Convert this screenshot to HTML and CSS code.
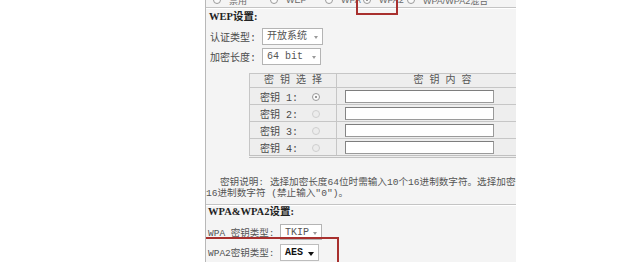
FILE: index.html
```html
<!DOCTYPE html>
<html lang="zh">
<head>
<meta charset="utf-8">
<link rel="stylesheet" href="styles.css">
</head>
<body>
<div class="panel">
  <div class="modes">
    <span class="opt o1"><i class="radio"></i>禁用</span>
    <span class="opt o2"><i class="radio"></i>WEP</span>
    <span class="opt o3"><i class="radio"></i>WPA</span>
    <span class="opt o4"><i class="radio on"></i>WPA2</span>
    <span class="opt o5"><i class="radio"></i>WPA/WPA2混合</span>
  </div>
  <div class="sep"></div>
  <div class="title">WEP设置:</div>
  <div class="field wep"><span class="label">认证类型:</span><span class="select s1">开放系统<i class="arrow"></i></span></div>
  <div class="field wep"><span class="label">加密长度:</span><span class="select s2">64 bit<i class="arrow"></i></span></div>
  <table class="keys">
    <tr class="head"><td class="c1">密 钥 选 择</td><td class="c2">密 钥 内 容</td></tr>
    <tr><td class="c1"><span class="kl">密钥 1:</span><i class="radio on"></i></td><td class="c2"><span class="input"></span></td></tr>
    <tr><td class="c1"><span class="kl">密钥 2:</span><i class="radio dim"></i></td><td class="c2"><span class="input"></span></td></tr>
    <tr><td class="c1"><span class="kl">密钥 3:</span><i class="radio dim"></i></td><td class="c2"><span class="input"></span></td></tr>
    <tr><td class="c1"><span class="kl">密钥 4:</span><i class="radio dim"></i></td><td class="c2"><span class="input"></span></td></tr>
  </table>
  <p class="note">密钥说明: 选择加密长度64位时需输入10个16进制数字符。选择加密长度128位时需输入26个<br>16进制数字符 (禁止输入"0")。</p>
  <div class="sep"></div>
  <div class="title t2">WPA&amp;WPA2设置:</div>
  <div class="field wpa"><span class="label">WPA 密钥类型:</span><span class="select s3">TKIP<i class="arrow"></i></span></div>
  <div class="field wpa"><span class="label">WPA2密钥类型:</span><span class="select s4 active">AES<i class="arrow"></i></span></div>
  <div class="mark mark-top"></div>
  <div class="mark mark-bottom"></div>
</div>
</body>
</html>
```
FILE: styles.css
```css
html, body {
  margin: 0;
  padding: 0;
  background: #ffffff;
}
body {
  width: 620px;
  height: 262px;
  overflow: hidden;
  font-family: "Liberation Mono", "Noto Sans CJK SC", monospace;
  font-size: 10px;
  color: #4a4a4a;
}
.panel {
  position: relative;
  margin-left: 205px;
  width: 310px;
  height: 262px;
  overflow: hidden;
  background: #f4f4f4;
  border-left: 1px solid #b8b8b8;
}
.modes {
  display: flex;
  height: 14px;
  margin-top: -7px;
  padding-left: 7px;
  align-items: center;
  overflow: hidden;
  white-space: nowrap;
  color: #6a6a6a;
  font-size: 9px;
  font-family: "Liberation Sans", "Noto Sans CJK SC", sans-serif;
}
.opt {
  display: flex;
  flex: none;
  align-items: center;
  gap: 8px;
  white-space: nowrap;
}
.opt.o1 { width: 57px; }
.opt.o2 { width: 55px; }
.opt.o3 { width: 38px; }
.opt.o4 { width: 44px; }
.radio {
  display: inline-block;
  flex: none;
  width: 8px;
  height: 8px;
  border-radius: 50%;
  border: 1px solid #9a9a9a;
  background: #fafafa;
  box-sizing: border-box;
  position: relative;
}
.radio.on::after {
  content: "";
  position: absolute;
  left: 2px;
  top: 2px;
  width: 2px;
  height: 2px;
  border-radius: 50%;
  background: #777;
}
.radio.dim {
  border-color: #cfcfcf;
  background: #ececec;
}
.sep {
  height: 1px;
  background: #c4c4c4;
  border-bottom: 1px solid #ffffff;
}
.title {
  height: 14px;
  line-height: 14px;
  margin-top: 1px;
  padding-left: 3px;
  font-weight: bold;
  color: #222;
  font-family: "Liberation Serif", "Noto Sans CJK SC", serif;
  font-size: 10.5px;
}
.title.t2 {
  margin-top: 0;
  height: 12px;
  line-height: 12px;
  padding-left: 2px;
}
.field {
  display: flex;
  align-items: center;
  height: 20px;
  white-space: nowrap;
}
.field.wep {
  padding-left: 4px;
}
.title + .field.wep { margin-top: 2px; }
.field.wep .label { width: 52px; }
.field.wpa {
  padding-left: 2px;
}
.title.t2 + .field.wpa { margin-top: 4px; }
.field.wpa .label { width: 72px; font-size: 9.5px; color: #555; }
.select {
  position: relative;
  display: inline-block;
  box-sizing: border-box;
  height: 17px;
  line-height: 15px;
  padding-left: 4px;
  background: #ffffff;
  border: 1px solid #b4b4b4;
  color: #555;
}
.select.s1 { width: 61px; }
.select.s2 { width: 59px; }
.select.s3 { width: 42px; height: 16px; }
.select.s4 { width: 39px; }
.select.active { color: #111; border-color: #bdbdbd; font-weight: bold; }
.arrow {
  position: absolute;
  right: 4px;
  top: 7px;
  width: 0;
  height: 0;
  border-left: 2.5px solid transparent;
  border-right: 2.5px solid transparent;
  border-top: 3px solid #9a9a9a;
}
.active .arrow {
  border-left-width: 3.5px;
  border-right-width: 3.5px;
  border-top: 4px solid #111;
}
.keys {
  margin-top: 7px;
  margin-left: 43px;
  width: 300px;
  border-collapse: collapse;
  border-bottom: 3px double #c0c0c0;
  table-layout: fixed;
}
.keys td {
  padding: 0;
  border: 1px solid #c6c6c6;
  background: #eeeeee;
  height: 16px;
  color: #4a4a4a;
  white-space: nowrap;
}
.keys .head td {
  height: 13px;
  line-height: 13px;
  text-align: center;
  color: #555;
}
.keys .c1 {
  width: 86px;
}
.keys .c1 .kl {
  display: inline-block;
  margin-left: 10px;
  width: 52px;
}
.keys .c2 .input {
  display: block;
  margin-left: 8px;
  width: 149px;
  height: 13px;
  box-sizing: border-box;
  background: #ffffff;
  border: 1px solid #9a9a9a;
  border-top-color: #7e7e7e;
  border-left-color: #858585;
}
.note {
  margin: 19px 0 5px 0;
  line-height: 11px;
  white-space: nowrap;
  text-indent: 14px;
  color: #555;
  font-size: 9.6px;
}
.mark {
  position: absolute;
  border: 2px solid #a8302e;
}
.mark-top {
  left: 150px;
  top: -10px;
  width: 38px;
  height: 21px;
}
.mark-bottom {
  left: -2px;
  top: 237px;
  width: 131px;
  height: 40px;
}
```
